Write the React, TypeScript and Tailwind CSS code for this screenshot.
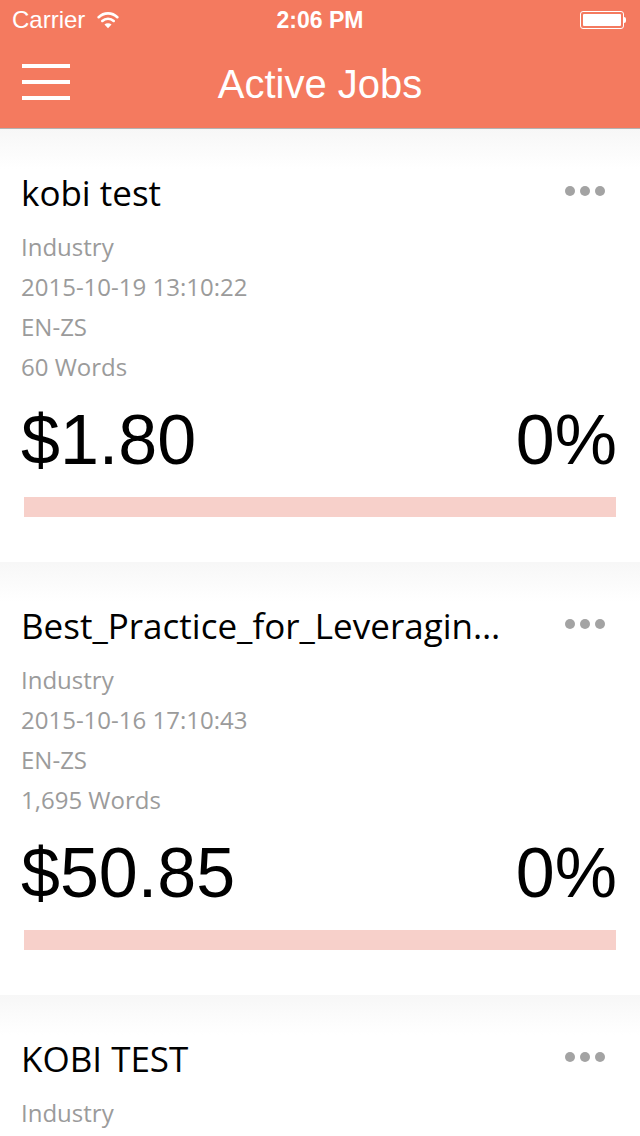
const jobs = [
  { title: 'kobi test', industry: 'Industry', date: '2015-10-19 13:10:22', lang: 'EN-ZS', words: '60 Words', price: '$1.80', progress: '0%' },
  { title: 'Best_Practice_for_Leveraging_Translation_Memory', industry: 'Industry', date: '2015-10-16 17:10:43', lang: 'EN-ZS', words: '1,695 Words', price: '$50.85', progress: '0%' },
  { title: 'KOBI TEST', industry: 'Industry', date: '2015-10-15 11:42:09', lang: 'EN-ZS', words: '120 Words', price: '$3.60', progress: '0%' },
];

const sans = "font-['Open_Sans','Noto_Sans',sans-serif]";
const helv = "font-['Liberation_Sans',Arial,sans-serif]";

function StatusBar() {
  return (
    <div className={`relative flex h-10 items-center justify-between pl-3 pr-[14px] text-white ${helv}`}>
      <div className="flex items-center gap-[12px]">
        <span className="text-[24px] leading-none">Carrier</span>
        <svg width="22" height="18" viewBox="0 0 20 16" fill="none" aria-hidden="true">
          <path d="M1.5 5.5 A12 12 0 0 1 18.5 5.5" stroke="white" strokeWidth="2.3" strokeLinecap="round" />
          <path d="M4.8 8.9 A7.4 7.4 0 0 1 15.2 8.9" stroke="white" strokeWidth="2.3" strokeLinecap="round" />
          <path d="M10 15.5 L6.8 12.2 A4.6 4.6 0 0 1 13.2 12.2 Z" fill="white" />
        </svg>
      </div>
      <span className="absolute left-1/2 -translate-x-1/2 text-[23px] font-bold leading-none">2:06 PM</span>
      <div className="flex items-center">
        <div className="h-[18px] w-[44px] rounded-[3px] border border-white p-[2px]">
          <div className="h-full w-full rounded-[1px] bg-white" />
        </div>
        <div className="h-[6px] w-[2px] rounded-r-sm bg-white" />
      </div>
    </div>
  );
}

function NavBar() {
  return (
    <div className="relative flex h-[88px] items-center px-[22px]">
      <div className="flex w-12 flex-col gap-3 pb-1">
        <div className="h-1 bg-white" />
        <div className="h-1 bg-white" />
        <div className="h-1 bg-white" />
      </div>
      <h1 className={`absolute left-1/2 -translate-x-1/2 text-[40px] leading-none text-white ${helv}`}>Active Jobs</h1>
    </div>
  );
}

function JobCard({ job }: { job: (typeof jobs)[number] }) {
  return (
    <div>
      <div className="h-10 bg-gradient-to-b from-[#f7f7f7] to-white" />
      <div className="pl-[21px] pr-[24px] pb-[45px]">
        <div className="flex items-center justify-between">
          <h2 className={`w-[494px] truncate text-[35px] leading-[48px] text-black ${sans}`}>{job.title}</h2>
          <div className="mr-[11px] mb-[4px] flex gap-[5px]" aria-hidden="true">
            <span className="h-[10px] w-[10px] rounded-full bg-[#a3a3a3]" />
            <span className="h-[10px] w-[10px] rounded-full bg-[#a3a3a3]" />
            <span className="h-[10px] w-[10px] rounded-full bg-[#a3a3a3]" />
          </div>
        </div>
        <div className={`mt-[10px] text-[24px] leading-[40px] text-[#9b9b9b] ${sans}`}>
          <p>{job.industry}</p>
          <p>{job.date}</p>
          <p>{job.lang}</p>
          <p>{job.words}</p>
        </div>
        <div className={`mt-[18px] flex items-center justify-between text-[70px] leading-[70px] text-black ${helv}`}>
          <span>{job.price}</span>
          <span className="-mr-[1px]">{job.progress}</span>
        </div>
        <div className="mt-[22px] ml-[3px] h-5 bg-[#f7d0ca]" />
      </div>
    </div>
  );
}

export default function App() {
  return (
    <div className="h-[1136px] w-[640px] overflow-hidden bg-white">
      {/* Header */}
      <header className="border-b border-[#b3b3b3] bg-[#f47a5f]">
        <StatusBar />
        <NavBar />
      </header>

      {/* Jobs list */}
      {jobs.map((job, index) => (
        <JobCard key={index} job={job} />
      ))}
    </div>
  );
}
